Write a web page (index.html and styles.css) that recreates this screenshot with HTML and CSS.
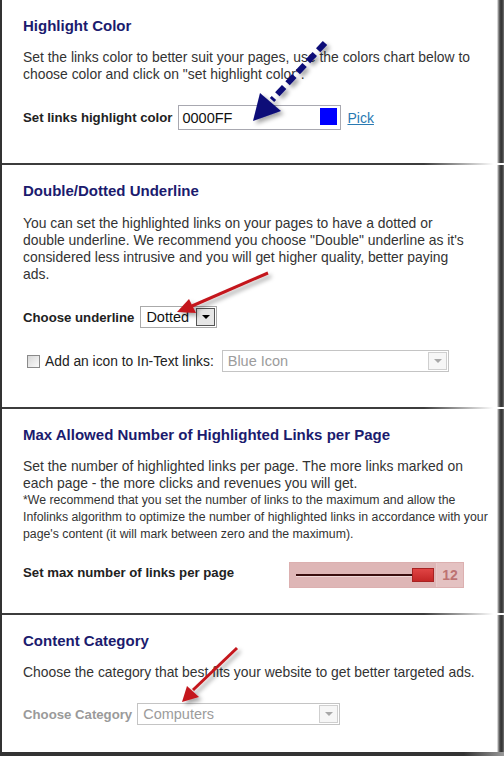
FILE: index.html
```html
<!DOCTYPE html>
<html lang="en">
<head>
    <meta charset="UTF-8">
    <meta name="viewport" content="width=device-width, initial-scale=1.0">
    <title>In-Text Settings</title>
    <link rel="stylesheet" href="styles.css">
</head>
<body>
    <div class="frame">
        <div class="page">
            <section class="panel panel-color">
                <h2>Highlight Color</h2>
                <p class="desc">Set the links color to better suit your pages, use the colors chart below to choose color and click on "set highlight color".</p>
                <div class="field">
                    <label class="field-label">Set links highlight color</label>
                    <div class="color-input">
                        <span>0000FF</span>
                        <span class="swatch"></span>
                    </div>
                    <a href="#" class="pick">Pick</a>
                </div>
            </section>

            <section class="panel panel-underline">
                <h2>Double/Dotted Underline</h2>
                <p class="desc">You can set the highlighted links on your pages to have a dotted or double underline. We recommend you choose "Double" underline as it's considered less intrusive and you will get higher quality, better paying ads.</p>
                <div class="field">
                    <label class="field-label">Choose underline</label>
                    <div class="select select-small">
                        <span>Dotted</span>
                        <span class="select-btn"></span>
                    </div>
                </div>
                <div class="field field-check">
                    <span class="checkbox"></span>
                    <label class="check-label">Add an icon to In-Text links:</label>
                    <div class="select select-off select-icon">
                        <span>Blue Icon</span>
                        <span class="select-btn"></span>
                    </div>
                </div>
            </section>

            <section class="panel panel-max">
                <h2>Max Allowed Number of Highlighted Links per Page</h2>
                <p class="desc">Set the number of highlighted links per page. The more links marked on each page - the more clicks and revenues you will get.</p>
                <p class="note">*We recommend that you set the number of links to the maximum and allow the Infolinks algorithm to optimize the number of highlighted links in accordance with your page's content (it will mark between zero and the maximum).</p>
                <div class="field">
                    <label class="field-label slider-label">Set max number of links per page</label>
                    <div class="slider">
                        <div class="slider-track">
                            <span class="slider-line"></span>
                            <span class="slider-thumb"></span>
                        </div>
                        <span class="slider-value">12</span>
                    </div>
                </div>
            </section>

            <section class="panel panel-category">
                <h2>Content Category</h2>
                <p class="desc">Choose the category that best fits your website to get better targeted ads.</p>
                <div class="field">
                    <label class="field-label label-off">Choose Category</label>
                    <div class="select select-off select-category">
                        <span>Computers</span>
                        <span class="select-btn"></span>
                    </div>
                </div>
            </section>
        </div>

        <!-- callout arrows drawn over the screenshot -->
        <svg class="arrows" width="504" height="759" viewBox="0 0 504 759">
            <defs>
                <filter id="shade" x="-20%" y="-20%" width="160%" height="160%">
                    <feDropShadow dx="3" dy="3" stdDeviation="2" flood-color="#000" flood-opacity="0.35"/>
                </filter>
            </defs>
            <g filter="url(#shade)">
                <line x1="325" y1="43" x2="272" y2="100" stroke="#0b0b78" stroke-width="6" stroke-dasharray="10 5"/>
                <polygon points="253,121 260,93 281,111" fill="#0b0b78"/>
            </g>
            <g filter="url(#shade)">
                <line x1="268" y1="273" x2="192" y2="306" stroke="#c4161c" stroke-width="3"/>
                <polygon points="177,312 189,299 196,313" fill="#c4161c"/>
            </g>
            <g filter="url(#shade)">
                <line x1="237" y1="648" x2="193" y2="690" stroke="#c4161c" stroke-width="3"/>
                <polygon points="182,702 187,686 199,697" fill="#c4161c"/>
            </g>
        </svg>
    </div>
</body>
</html>
```

FILE: styles.css
```css
body {
    margin: 0;
    background: #fff;
    font-family: "Liberation Sans", Arial, Helvetica, sans-serif;
    color: #333;
}
.frame {
    position: relative;
    width: 504px;
    height: 759px;
    overflow: hidden;
}
.page {
    width: 504px;
    border-left: 2px solid #333;
    box-sizing: border-box;
    background: linear-gradient(to right, #fff 495px, #aaa 496px, #444 498px, #333 500px, #777 502px);
}
.panel {
    padding: 17px 0 0 21px;
    background: linear-gradient(to right, #3c3c3c 84%, #fff 98%) left bottom / 100% 2px no-repeat;
}
.panel h2 {
    margin: 0;
    font-size: 15px;
    line-height: 18px;
    font-weight: bold;
    color: #1b1b6e;
}
.desc {
    max-width: 450px;
    margin: 14px 0 0;
    font-size: 13.9px;
    line-height: 17px;
}
.note {
    max-width: 470px;
    margin: 0;
    font-size: 12.3px;
    line-height: 17px;
}
.field {
    display: flex;
    align-items: center;
}
.field-label {
    font-size: 13.2px;
    font-weight: bold;
    color: #222;
}
.label-off {
    color: #9a9a9a;
}

/* highlight colour */
.panel-color {
    padding-bottom: 35px;
}
.panel-color .field {
    margin-top: 22px;
}
.color-input {
    display: flex;
    align-items: center;
    width: 163px;
    height: 25px;
    margin-left: 6px;
    padding: 0 3px 0 3px;
    box-sizing: border-box;
    border: 1px solid #a8a8b0;
    font-size: 14.5px;
    color: #111;
}
.swatch {
    width: 17px;
    height: 17px;
    margin-left: auto;
    margin-top: -3px;
    background: #0000ff;
}
.pick {
    margin-left: 6px;
    font-size: 14px;
    color: #2a7ab2;
}

/* selects */
.select {
    display: flex;
    align-items: center;
    height: 22px;
    padding: 0 1px 0 5px;
    box-sizing: border-box;
    border: 1px solid #aaa;
    background: #fff;
    font-size: 14.5px;
    color: #111;
}
.select span:first-child {
    flex: 1;
}
.select-btn {
    position: relative;
    width: 19px;
    height: 18px;
    box-sizing: border-box;
    border: 1px solid #555;
    background: #e6e6e6;
}
.select-btn::after {
    content: "";
    position: absolute;
    left: 5px;
    top: 6px;
    border-left: 4px solid transparent;
    border-right: 4px solid transparent;
    border-top: 4px solid #000;
}
.select-off {
    border-color: #c4c4c4;
    color: #9c9c9c;
}
.select-off .select-btn {
    border-color: #cfcfcf;
    background: #f6f6f6;
}
.select-off .select-btn::after {
    border-top-color: #a8a8a8;
}

/* underline */
.panel-underline {
    padding-bottom: 37px;
}
.panel-underline .desc {
    margin-top: 15px;
}
.panel-underline .field {
    margin-top: 23px;
}
.select-small {
    width: 77px;
    margin-left: 6px;
}
.field-check {
    padding-left: 4px;
}
.panel-underline .field-check {
    margin-top: 22px;
}
.checkbox {
    width: 13px;
    height: 13px;
    box-sizing: border-box;
    border: 1px solid #8a8a8a;
    background: linear-gradient(135deg, #d8d8d8, #fafafa);
}
.check-label {
    margin-left: 5px;
    font-size: 13.8px;
    color: #222;
}
.select-icon {
    width: 227px;
    margin-left: 8px;
}

/* max links */
.panel-max {
    padding-bottom: 27px;
}
.panel-max .desc {
    max-width: 456px;
}
.panel-max .field {
    margin-top: 19px;
    align-items: flex-start;
}
.slider-label {
    width: 266px;
    margin-top: 3px;
}
.slider {
    display: flex;
    width: 175px;
    height: 26px;
    border: 1px solid #dcb0b0;
    box-sizing: border-box;
    background: #deb6b6;
}
.slider-track {
    position: relative;
    display: flex;
    align-items: center;
    flex: 1;
    padding-left: 6px;
    border-right: 1px solid #e8caca;
}
.slider-line {
    width: 118px;
    height: 2px;
    background: #3a0d0d;
    box-shadow: 0 1px 0 #f0d8d8;
}
.slider-thumb {
    width: 22px;
    height: 14px;
    margin-left: -2px;
    box-sizing: border-box;
    border: 1px solid #a82222;
    background: linear-gradient(#e04444, #c42626);
}
.slider-value {
    width: 26px;
    line-height: 24px;
    text-align: center;
    font-size: 14px;
    font-weight: bold;
    color: #bd7272;
    background: #e4c2c2;
}

/* category */
.panel-category {
    padding-bottom: 31px;
    background: linear-gradient(to right, #333 92%, #999 100%) left bottom / 100% 4px no-repeat;
}
.panel-category .desc {
    max-width: 462px;
}
.panel-category .field {
    margin-top: 22px;
}
.select-category {
    width: 203px;
    margin-left: 5px;
}

.arrows {
    position: absolute;
    top: 0;
    left: 0;
    pointer-events: none;
}
```
